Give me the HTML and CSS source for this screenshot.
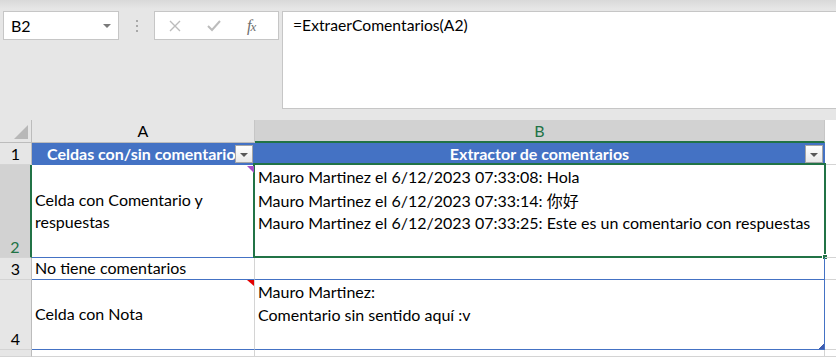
FILE: index.html
```html
<!DOCTYPE html>
<html lang="es">
<head>
  <meta charset="UTF-8" />
  <title>ExtraerComentarios</title>
  <link rel="stylesheet" href="styles.css">
</head>
<body>
  <div class="barra">
    <div class="nombre">
      <span>B2</span>
      <span class="flecha"></span>
    </div>
    <div class="puntos"><i></i><i></i><i></i></div>
    <div class="botones">
      <svg width="12" height="12" viewBox="0 0 12 12"><path d="M1 1 L11 11 M11 1 L1 11" stroke="#bcbcbc" stroke-width="1.4" fill="none"/></svg>
      <svg width="14" height="12" viewBox="0 0 14 12"><path d="M1 6 L5 10 L13 1" stroke="#bcbcbc" stroke-width="2" fill="none"/></svg>
      <span class="fx">f<small>x</small></span>
    </div>
    <div class="formula">=ExtraerComentarios(A2)</div>
  </div>

  <div class="hoja">
    <div class="esquina"><span class="tri"></span></div>
    <div class="col">A</div>
    <div class="col activa">B</div>
    <div class="col vacia"></div>

    <div class="fila">1</div>
    <div class="titulo izq">Celdas con/sin comentarios<span class="filtro"></span></div>
    <div class="titulo centro">Extractor de comentarios<span class="filtro"></span></div>
    <div class="celda fuera"></div>

    <div class="fila activa">2</div>
    <div class="celda medio tabla">Celda con Comentario y<br>respuestas<span class="marca morada"></span></div>
    <div class="celda arriba tabla ult">
      Mauro Martinez el 6/12/2023 07:33:08: Hola<br>
      Mauro Martinez el 6/12/2023 07:33:14: <span class="cjk">你好</span><br>
      Mauro Martinez el 6/12/2023 07:33:25: Este es un comentario con respuestas
      <span class="seleccion"><span class="asa"></span></span>
    </div>
    <div class="celda fuera"></div>

    <div class="fila">3</div>
    <div class="celda medio tabla">No tiene comentarios</div>
    <div class="celda tabla ult"></div>
    <div class="celda fuera"></div>

    <div class="fila">4</div>
    <div class="celda medio tabla">Celda con Nota<span class="marca roja"></span></div>
    <div class="celda arriba tabla ult">
      Mauro Martinez:<br>
      Comentario sin sentido aquí :v
      <span class="tirador"></span>
    </div>
    <div class="celda fuera"></div>

    <div class="fila"></div>
    <div class="celda"></div>
    <div class="celda"></div>
    <div class="celda fuera"></div>
  </div>
</body>
</html>
```

FILE: styles.css
```css
* {
  box-sizing: border-box;
  margin: 0;
  padding: 0;
}

body {
  width: 836px;
  height: 357px;
  overflow: hidden;
  background: #e6e6e6;
  font-family: Lato, 'Liberation Sans', 'Noto Sans CJK SC', sans-serif;
  font-size: 16px;
  color: #000;
}

.barra {
  height: 120px;
  display: flex;
  align-items: flex-start;
  padding: 11px 0 0 3px;
  background: linear-gradient(#d9d9d9 0, #e6e6e6 9px);
}

.nombre {
  width: 116px;
  height: 29px;
  background: #fff;
  border: 1px solid #c6c6c6;
  display: flex;
  align-items: center;
  justify-content: space-between;
  padding: 0 7px 0 7px;
  font-size: 16px;
}

.flecha {
  border-left: 4px solid transparent;
  border-right: 4px solid transparent;
  border-top: 4px solid #7a7a7a;
}

.puntos {
  width: 35px;
  height: 29px;
  display: flex;
  flex-direction: column;
  align-items: center;
  justify-content: center;
  gap: 3px;
}

.puntos i {
  width: 2px;
  height: 2px;
  background: #a8a8a8;
}

.botones {
  width: 125px;
  height: 29px;
  background: #fff;
  border: 1px solid #c6c6c6;
  display: flex;
  align-items: center;
  gap: 26px;
  padding-left: 14px;
  margin-right: 3px;
}

.fx {
  font-family: 'Liberation Serif', serif;
  font-style: italic;
  font-size: 16px;
  color: #6e6e6e;
  letter-spacing: -1px;
}

.fx small {
  font-size: 13px;
}

.formula {
  flex: 1;
  height: 98px;
  background: #fff;
  border: 1px solid #c6c6c6;
  border-right: none;
  padding: 4px 10px;
  font-size: 15.7px;
}

.hoja {
  display: grid;
  grid-template-columns: 32px 223px 570px 1fr;
  grid-template-rows: 23px 22px 93px 22px 70px 1fr;
  height: 237px;
  background: #fff;
}

.esquina {
  background: #e6e6e6;
  border-right: 1px solid #bcbcbc;
  border-bottom: 1px solid #bcbcbc;
  position: relative;
}

.tri {
  position: absolute;
  right: 3px;
  bottom: 3px;
  border-left: 14px solid transparent;
  border-bottom: 14px solid #b8b8b8;
}

.col {
  background: #e6e6e6;
  border-right: 1px solid #c6c6c6;
  border-bottom: 1px solid #bcbcbc;
  text-align: center;
  line-height: 22px;
}

.col.activa {
  background: #d2d2d2;
  color: #217346;
  border-bottom: 2px solid #217346;
}

.col.vacia {
  background: #fff;
  border: none;
}

.fila {
  background: #e6e6e6;
  border-right: 1px solid #bcbcbc;
  border-bottom: 1px solid #d4d4d4;
  display: flex;
  align-items: flex-end;
  justify-content: center;
  line-height: 21px;
}

.fila.activa {
  background: #d2d2d2;
  color: #217346;
  border-right: 2px solid #217346;
}

.titulo {
  background: #4472c4;
  color: #fff;
  font-weight: bold;
  line-height: 22px;
  white-space: nowrap;
  overflow: hidden;
  position: relative;
}

.titulo.izq {
  padding-left: 15px;
  border-right: 1px solid #4472c4;
}

.titulo.centro {
  text-align: center;
  border-right: 1px solid #4472c4;
}

.filtro {
  position: absolute;
  right: 1px;
  top: 2px;
  width: 18px;
  height: 18px;
  border: 1px solid #a6a6a6;
  background: linear-gradient(#fff, #e9e9e9);
}

.filtro::after {
  content: '';
  position: absolute;
  left: 4px;
  top: 7px;
  border-left: 4px solid transparent;
  border-right: 4px solid transparent;
  border-top: 4px solid #595959;
}

.celda {
  border-right: 1px solid #d4d4d4;
  border-bottom: 1px solid #d4d4d4;
  position: relative;
  white-space: nowrap;
  line-height: 22.5px;
}

.celda.tabla {
  border-bottom-color: #4472c4;
}

.celda.ult {
  border-right-color: #4472c4;
}

.celda.fuera {
  border-right: none;
}

.medio {
  display: flex;
  align-items: center;
  padding-left: 3px;
}

.arriba {
  padding: 1px 0 0 3px;
}

.cjk {
  font-family: 'Noto Sans CJK SC', sans-serif;
}

.marca {
  position: absolute;
  top: 1px;
  right: 0;
  z-index: 2;
  border-left: 7px solid transparent;
}

.morada {
  border-top: 7px solid #a64fc9;
}

.roja {
  top: 0;
  border-top: 6px solid #e30000;
}

.seleccion {
  position: absolute;
  left: -2px;
  top: -2px;
  right: -2px;
  bottom: -1px;
  border: 2px solid #217346;
}

.asa {
  position: absolute;
  right: -4px;
  bottom: -4px;
  width: 6px;
  height: 6px;
  background: #217346;
  border: 1px solid #fff;
}

.tirador {
  position: absolute;
  right: 0;
  bottom: 0;
  width: 5px;
  height: 5px;
  background: linear-gradient(135deg, transparent 40%, #3f5db0 40%);
}
```
